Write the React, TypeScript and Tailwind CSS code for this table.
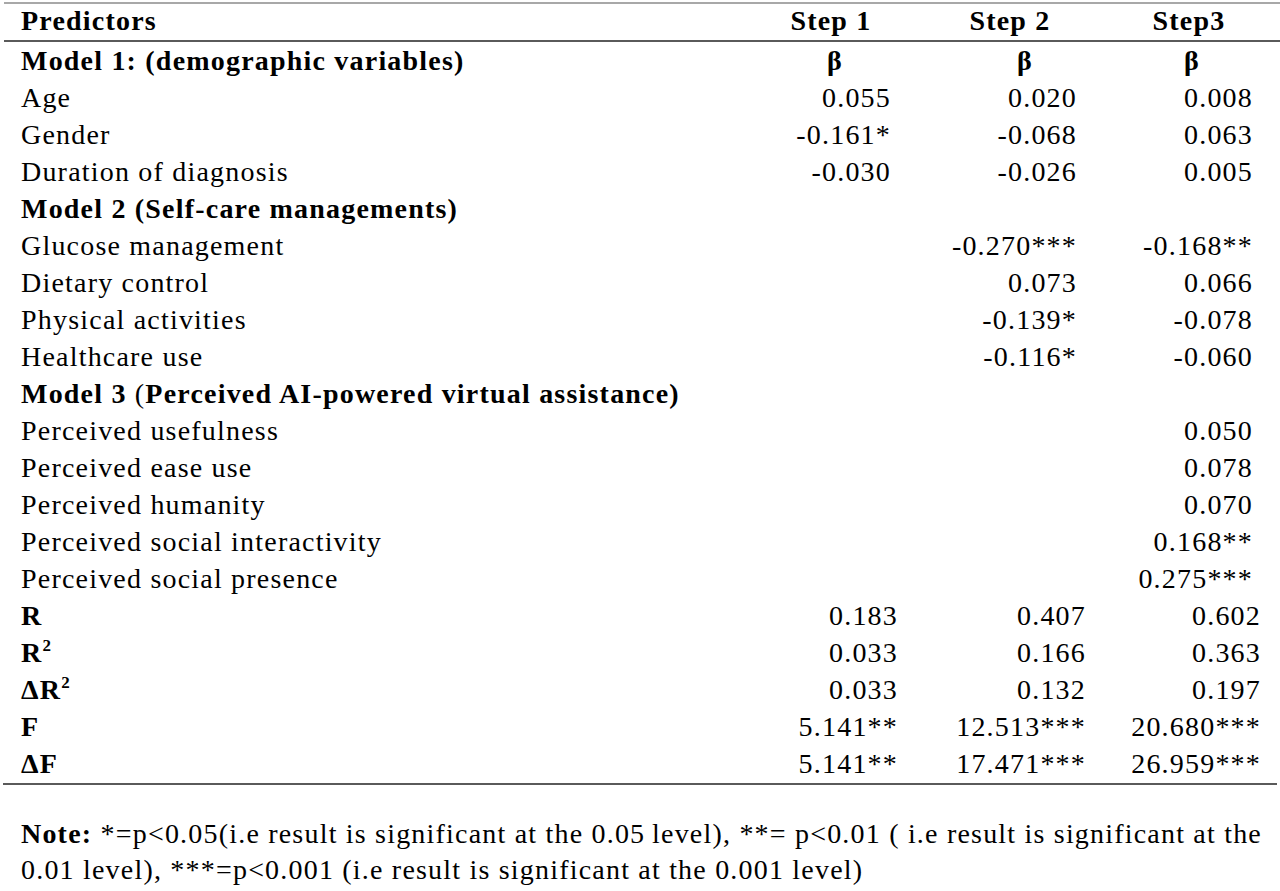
import React from "react";

type Row = {
  label: React.ReactNode;
  bold?: boolean;
  v?: [string, string, string];
  stat?: boolean;
};

const Sup = () => <sup className="text-[17px] relative -top-[11px]">2</sup>;

const rows: Row[] = [
  { label: "Age", v: ["0.055", "0.020", "0.008"] },
  { label: "Gender", v: ["-0.161*", "-0.068", "0.063"] },
  { label: "Duration of diagnosis", v: ["-0.030", "-0.026", "0.005"] },
  { label: "Model 2 (Self-care managements)", bold: true },
  { label: "Glucose management", v: ["", "-0.270***", "-0.168**"] },
  { label: "Dietary control", v: ["", "0.073", "0.066"] },
  { label: "Physical activities", v: ["", "-0.139*", "-0.078"] },
  { label: "Healthcare use", v: ["", "-0.116*", "-0.060"] },
  {
    label: (
      <>
        <span className="font-bold">Model 3</span> (
        <span className="font-bold">Perceived AI-powered virtual assistance)</span>
      </>
    ),
  },
  { label: "Perceived usefulness", v: ["", "", "0.050"] },
  { label: "Perceived ease use", v: ["", "", "0.078"] },
  { label: "Perceived humanity", v: ["", "", "0.070"] },
  { label: "Perceived social interactivity", v: ["", "", "0.168**"] },
  { label: "Perceived social presence", v: ["", "", "0.275***"] },
  { label: "R", bold: true, stat: true, v: ["0.183", "0.407", "0.602"] },
  {
    label: (
      <>
        R<Sup />
      </>
    ),
    bold: true,
    stat: true,
    v: ["0.033", "0.166", "0.363"],
  },
  {
    label: (
      <>
        ΔR<Sup />
      </>
    ),
    bold: true,
    stat: true,
    v: ["0.033", "0.132", "0.197"],
  },
  { label: "F", bold: true, stat: true, v: ["5.141**", "12.513***", "20.680***"] },
  { label: "ΔF", bold: true, stat: true, v: ["5.141**", "17.471***", "26.959***"] },
];

function TableRow({ r }: { r: Row }) {
  return (
    <div className="flex h-[37px] items-center">
      <div className={`flex-1 pl-[21px] whitespace-nowrap ${r.bold ? "font-bold" : ""}`}>{r.label}</div>
      {r.v &&
        (r.stat ? (
          <>
            <div className="w-[188px] text-right whitespace-nowrap">{r.v[0]}</div>
            <div className="w-[188px] text-right whitespace-nowrap">{r.v[1]}</div>
            <div className="w-[175px] text-right whitespace-nowrap">{r.v[2]}</div>
            <div className="w-[19px]" />
          </>
        ) : (
          <>
            <div className="w-[186px] text-right whitespace-nowrap">{r.v[0]}</div>
            <div className="w-[186px] text-right whitespace-nowrap">{r.v[1]}</div>
            <div className="w-[176px] text-right whitespace-nowrap">{r.v[2]}</div>
            <div className="w-[27px]" />
          </>
        ))}
    </div>
  );
}

export default function App() {
  return (
    <div
      className="w-[1280px] h-[891px] bg-white text-black text-[28px] leading-none tracking-[1.2px] overflow-hidden"
      style={{ fontFamily: '"Liberation Serif", "Times New Roman", serif' }}
    >
      <div className="pt-[2px]">
        <div className="ml-[4px] h-[2px] bg-[#a8a8a8]" />
        <div className="flex h-[36px] items-center font-bold pb-[3px]">
          <div className="flex-1 pl-[21px]">Predictors</div>
          <div className="w-[120px] text-center whitespace-nowrap mr-[59px]">Step 1</div>
          <div className="w-[120px] text-center whitespace-nowrap mr-[59px]">Step 2</div>
          <div className="w-[120px] text-center whitespace-nowrap mr-[31px]">Step3</div>
        </div>
        <div className="ml-[4px] h-[2px] bg-[#5a5a5a]" />
        <div className="flex h-[37px] items-center font-bold">
          <div className="flex-1 pl-[21px] whitespace-nowrap">Model 1: (demographic variables)</div>
          <div className="w-[20px] text-center mr-[170px]">β</div>
          <div className="w-[20px] text-center mr-[147px]">β</div>
          <div className="w-[20px] text-center mr-[78px]">β</div>
        </div>
        {rows.map((r, i) => (
          <TableRow key={i} r={r} />
        ))}
        <div className="ml-[3px] mr-[3px] mt-[1px] h-[2px] bg-[#5a5a5a]" />
        <div className="mt-[31px] pl-[21px] pr-[18px] leading-[36px]">
          <div className="whitespace-nowrap flex justify-between">
            <span>
              <span className="font-bold">Note:</span> *=p&lt;0.05(i.e result is significant at the 0.05
            </span>
            <span>level), **= p&lt;0.01 ( i.e result is significant at the</span>
          </div>
          <div>0.01 level), ***=p&lt;0.001 (i.e result is significant at the 0.001 level)</div>
        </div>
      </div>
    </div>
  );
}
